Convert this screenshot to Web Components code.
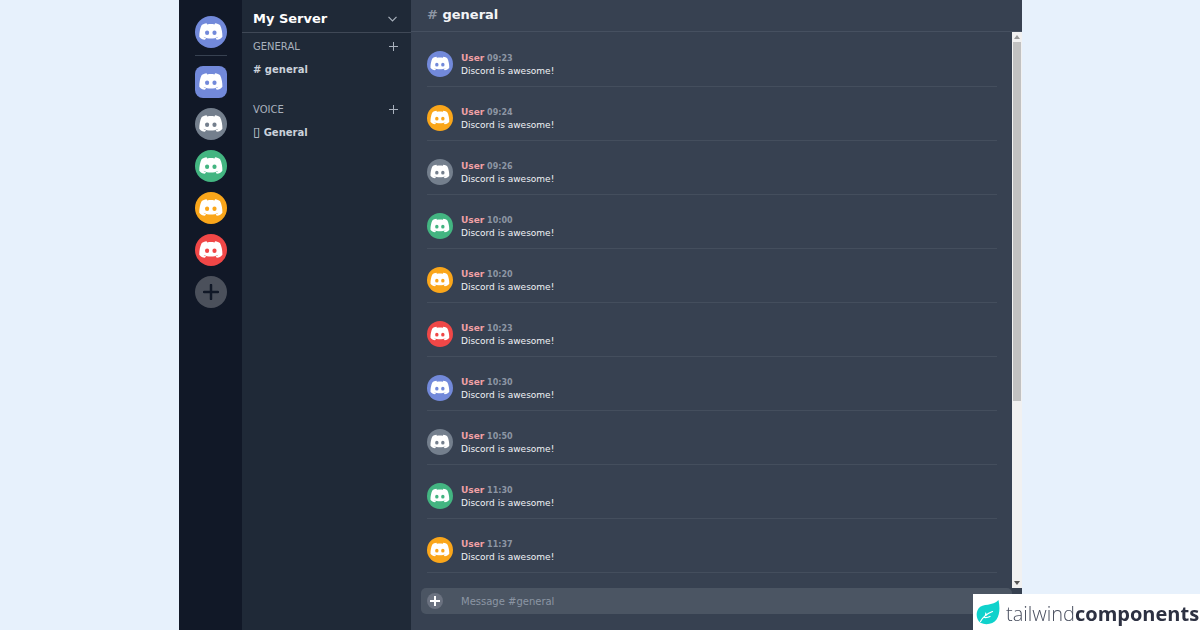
<!DOCTYPE html>
<html lang="en">
<head>
<meta charset="utf-8">
<meta name="viewport" content="width=device-width, initial-scale=1">
<title>My Server</title>
<style>
  html, body { height: 100%; margin: 0; }
  body { background: #e7f1fc; font-family: "DejaVu Sans", sans-serif; font-size: 10px; overflow: hidden; }
</style>
</head>
<body>
<chat-app></chat-app>
<brand-badge></brand-badge>
<script>
const BASE = `*{box-sizing:border-box} button{font:inherit;color:inherit;background:none;border:0;padding:0;margin:0;display:grid;place-items:center;cursor:pointer} a{color:inherit;text-decoration:none} h1,h2,p,ul{margin:0;padding:0;font-size:inherit;font-weight:inherit} svg{display:block}`;
function define(name, css, html) {
  customElements.define(name, class extends HTMLElement {
    constructor() {
      super();
      const t = document.createElement('template');
      const body = typeof html === 'function' ? html(this) : html;
      t.innerHTML = `<style>${BASE}${css}</style>${body}`;
      this.attachShadow({ mode: 'open' }).append(t.content.cloneNode(true));
    }
  });
}

define('user-avatar', `
  :host{display:block;width:var(--size,32px);height:var(--size,32px);flex:none;border-radius:50%;overflow:hidden;background:#7289da}
  :host([square]){border-radius:8px}
  :host([color=gray]){background:#747f8d}
  :host([color=green]){background:#43b581}
  :host([color=orange]){background:#faa61a}
  :host([color=red]){background:#f04747}
  svg{width:100%;height:100%;fill:#fff}`,
  `<svg viewBox="0 0 32 32" aria-hidden="true"><path fill-rule="evenodd" d="M11.600 7.200C9.600 7.400 7.800 8.200 6.600 9.200C5 12.500 4.200 16.500 4.300 20.700C5.600 22.600 7.600 23.700 9.900 23.800L11.100 22.300C9.800 21.900 9 21.400 8.300 20.700C12.900 23.200 18.800 23.200 23.400 20.700C22.700 21.400 21.900 21.900 20.600 22.300L21.800 23.800C24.100 23.700 26.100 22.600 27.400 20.700C27.500 16.500 26.700 12.500 25.100 9.200C23.900 8.200 22.100 7.400 20.100 7.200L19.500 8.400C17.100 8 14.600 8 12.200 8.400ZM12.100 14.500a2.100 2.300 0 1 1 0 4.600a2.100 2.300 0 1 1 0-4.600ZM19.500 14.500a2.100 2.300 0 1 1 0 4.600a2.100 2.300 0 1 1 0-4.600Z"/></svg>`);

define('server-rail', `
  :host{display:block;background:#111827;padding-top:16px}
  nav{display:flex;flex-direction:column;align-items:center;gap:10px}
  a{display:block}
  hr{width:32px;height:1px;border:0;margin:-3px 0 0;background:#374151}
  button{width:32px;height:32px;border-radius:50%;background:#4b505b}
  svg{width:16px;height:16px;stroke:#111827;stroke-width:2.500;stroke-linecap:round}`,
  `<nav aria-label="Servers">
    <a href="#home" aria-label="Home"><user-avatar></user-avatar></a><hr>
    <a href="#s1" aria-label="Server 1"><user-avatar square></user-avatar></a>
    ${['gray','green','orange','red'].map(c => `<a href="#${c}" aria-label="${c} server"><user-avatar color="${c}"></user-avatar></a>`).join('')}
    <button aria-label="Add server"><svg viewBox="0 0 16 16"><path d="M8 1v14M1 8h14"/></svg></button>
  </nav>`);

define('channel-group', `
  :host{display:block;color:#cbd2db}
  header{display:flex;align-items:center;justify-content:space-between;height:26px;padding:0 13px 0 11px;color:#a9b1bd}
  svg{width:9px;height:9px;stroke:#a9b1bd;stroke-width:1}
  ul{list-style:none;padding:3px 11px 19px;font-weight:bold}
  ::slotted(a){display:block;line-height:15px;color:inherit;text-decoration:none}`,
  el => `<header><h2>${el.getAttribute('label')}</h2><button aria-label="Add channel"><svg viewBox="0 0 9 9"><path d="M4.500 0v9M0 4.500h9"/></svg></button></header><ul><li><slot></slot></li></ul>`);

define('channel-sidebar', `
  :host{display:block;background:#1f2937}
  .top{display:flex;align-items:center;justify-content:space-between;height:33px;padding:5px 14px 0 11px;border-bottom:1px solid #3f4856;color:#fff;font-size:13px;font-weight:bold}
  .top svg{width:9px;height:6px;fill:none;stroke:#a9b1bd;stroke-width:1.200}
  i{font-style:normal;font-weight:normal;font-size:13px;line-height:1}`,
  `<header class="top"><h1>My Server</h1><button aria-label="Server menu"><svg viewBox="0 0 9 6"><path d="M.5 .8l4 4 4-4"/></svg></button></header>
   <channel-group label="GENERAL"><a href="#general"># general</a></channel-group>
   <channel-group label="VOICE"><a href="#voice"><i>▯</i> General</a></channel-group>`);

define('chat-message', `
  :host{display:flex;gap:8px;height:54px;padding-top:18px;border-bottom:1px solid #444e5d;--size:26px;font-size:9px;line-height:13px;color:#f0f2f5}
  div{padding-top:1px}
  b{color:#f0a0a5}
  time{font-size:8px;font-weight:bold;color:#8d96a4}`,
  el => `<user-avatar color="${el.getAttribute('color')}"></user-avatar><div><p><b>User</b> <time>${el.getAttribute('time')}</time></p><p><slot></slot></p></div>`);

define('scroll-track', `
  :host{display:flex;flex-direction:column;width:10px;background:#f1f1f1}
  button{height:10px;flex:none}
  svg{width:6px;height:4px;fill:#555}
  .up svg{fill:#999}
  .area{flex:1;display:flex;flex-direction:column;padding:0 1px}
  .thumb{height:67%;background:#c1c1c1}`,
  `<button class="up" aria-label="Scroll up"><svg viewBox="0 0 6 4"><path d="M3 0l3 4H0z"/></svg></button>
   <div class="area"><div class="thumb"></div></div>
   <button aria-label="Scroll down"><svg viewBox="0 0 6 4"><path d="M3 4l3-4H0z"/></svg></button>`);

define('message-composer', `
  :host{display:block;padding:0 10px 16px}
  form{display:flex;align-items:center;gap:18px;height:26px;padding:0 6px;border-radius:5px;background:#4b5563}
  button{width:16px;height:16px;flex:none;border-radius:50%;background:#6b7280}
  svg{width:10px;height:10px;stroke:#fff;stroke-width:2}
  input{flex:1;min-width:0;border:0;padding:0;background:none;font:inherit;color:#fff;outline:0}
  input::placeholder{color:#8c95a3;opacity:1}`,
  `<form><button type="button" aria-label="Attach"><svg viewBox="0 0 10 10"><path d="M5 0v10M0 5h10"/></svg></button><input type="text" aria-label="Message #general" placeholder="Message #general"></form>`);

const log = [['','09:23'],['orange','09:24'],['gray','09:26'],['green','10:00'],['orange','10:20'],['red','10:23'],['','10:30'],['gray','10:50'],['green','11:30'],['orange','11:37']];
define('chat-panel', `
  :host{display:flex;flex-direction:column;background:#374151;min-width:0}
  header{height:32px;flex:none;padding:0 16px;border-bottom:1px solid #465060;font-size:13px;font-weight:bold;line-height:30px;color:#f3f4f6}
  header span{color:#8d96a4}
  .body{flex:1;min-height:0;display:flex}
  .list{flex:1;min-width:0;overflow:hidden;padding:1px 15px 0 16px}`,
  `<header><h2><span>#</span> general</h2></header>
   <div class="body"><div class="list">${log.map(([c,t]) => `<chat-message color="${c}" time="${t}">Discord is awesome!</chat-message>`).join('')}</div><scroll-track></scroll-track></div>
   <message-composer></message-composer>`);

define('chat-app', `
  :host{display:grid;grid-template-columns:63px 169px 1fr;height:100vh;margin:0 178px 0 179px}`,
  `<server-rail></server-rail><channel-sidebar></channel-sidebar><chat-panel></chat-panel>`);

define('brand-badge', `
  :host{position:fixed;right:0;bottom:0;width:227px;height:36px;background:#fff}
  a{display:flex;align-items:center;gap:6px;height:100%;padding:2px 3px 0;font:300 20px "Open Sans",sans-serif;color:#4a5060;white-space:nowrap}
  svg{width:24px;height:26px;flex:none}
  b{font-weight:700;color:#2d3142}`,
  `<a href="#tailwindcomponents"><svg viewBox="0 0 24 26" aria-hidden="true"><path fill="#0fd2cc" d="M22.500 0C24 7 24 14 20.500 19.500C17.500 24 10 25.500 4.500 22.800C.2 19.500-.5 13 2.500 8.500C6.500 3 17 6.500 22.500 0Z"/><path fill="none" stroke="#fff" stroke-width="1.200" stroke-linecap="round" d="M4.500 21.500C7 17 11 13.500 16.500 11.500M10 15.500l-.3-2.500M8.500 17.500c2 .2 4-.2 5.500-1"/></svg><span>tailwind<b>components</b></span></a>`);
</script>
</body>
</html>
